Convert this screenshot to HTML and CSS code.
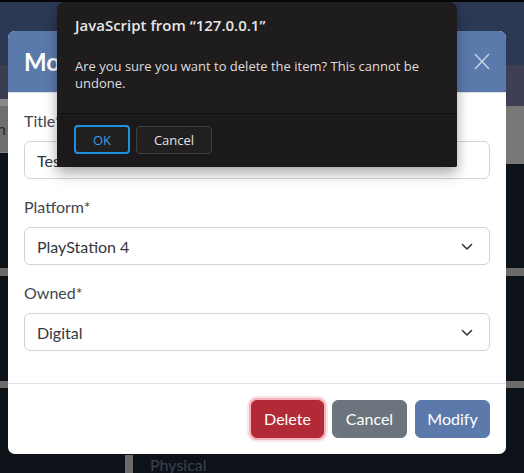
FILE: index.html
```html
<!DOCTYPE html>
<html lang="en">
<head>
<meta charset="utf-8">
<title>Modify</title>
<link rel="stylesheet" href="styles.css">
</head>
<body>
<div class="page">
  <div class="topline"></div>
  <div class="navbar"></div>
  <div class="content">
    <div class="side side-left">
      <div class="b l-a"></div>
      <div class="b l-b"></div>
      <div class="b l-c"><span class="edge-text">n</span></div>
      <div class="b l-line"></div>
      <div class="b l-dark1"></div>
      <div class="b rule"></div>
      <div class="b l-dark2"></div>
      <div class="b rule rule-2"></div>
    </div>
    <div class="center">
      <div class="cell-row"><span class="vbar"></span><span class="physical">Physical</span></div>
    </div>
    <div class="side side-right">
      <div class="b r-a"></div>
      <div class="b r-c"></div>
      <div class="b r-dark1"></div>
      <div class="b rule"></div>
      <div class="b l-dark2"></div>
      <div class="b rule rule-2"></div>
    </div>
  </div>
</div>

<div class="modal">
  <div class="modal-header">
    <h4 class="modal-title">Modify Game</h4>
    <span class="btn-close">
      <svg width="16" height="17" viewBox="0 0 16 17"><path d="M1 1 L15 16 M15 1 L1 16" stroke="currentColor" stroke-width="1.5" fill="none"/></svg>
    </span>
  </div>
  <div class="modal-body">
    <div class="group">
      <div class="label">Title*</div>
      <div class="control">Test Game</div>
    </div>
    <div class="group">
      <div class="label">Platform*</div>
      <div class="control select"><span>PlayStation 4</span>
        <svg class="chev" width="12" height="8" viewBox="0 0 12 8"><path d="M1.5 1.5 6 6 10.5 1.5" fill="none" stroke="#343a40" stroke-width="1.6" stroke-linecap="round" stroke-linejoin="round"/></svg>
      </div>
    </div>
    <div class="group">
      <div class="label">Owned*</div>
      <div class="control select"><span>Digital</span>
        <svg class="chev" width="12" height="8" viewBox="0 0 12 8"><path d="M1.5 1.5 6 6 10.5 1.5" fill="none" stroke="#343a40" stroke-width="1.6" stroke-linecap="round" stroke-linejoin="round"/></svg>
      </div>
    </div>
  </div>
  <div class="modal-footer">
    <button class="btn btn-danger">Delete</button>
    <button class="btn btn-secondary">Cancel</button>
    <button class="btn btn-primary">Modify</button>
  </div>
</div>

<div class="jsdialog">
  <div class="jd-main">
    <div class="jd-title">JavaScript from “127.0.0.1”</div>
    <div class="jd-msg">Are you sure you want to delete the item? This cannot be undone.</div>
  </div>
  <div class="jd-foot">
    <button class="jd-btn jd-ok">OK</button>
    <button class="jd-btn jd-cancel">Cancel</button>
  </div>
</div>
</body>
</html>
```
FILE: styles.css
```css
* { box-sizing: border-box; }
html, body { margin: 0; padding: 0; }
body {
  width: 524px;
  height: 473px;
  overflow: hidden;
  position: relative;
  background: #0d1219;
  font-family: Lato, "Noto Sans", sans-serif;
}
.page { display: flex; flex-direction: column; height: 473px; }
.topline { height: 2px; background: #060606; }
.navbar { height: 63px; background: #2c3954; }
.content { flex: 1; display: flex; }
.side { display: flex; flex-direction: column; }
.side-left { width: 8px; }
.side-right { width: 18px; }
.b { flex: none; }
.l-a { height: 34px; background: #3b3d50; }
.l-b { height: 7px; background: #8a8a8a; }
.l-c { height: 46px; background: #6e6e6e; overflow: hidden; color: #2a2a2a; font-size: 16px; line-height: 46px; }
.edge-text { display: block; margin-left: -3px; }
.l-line { height: 1px; background: #858585; }
.l-dark1 { height: 115px; }
.rule { height: 8px; background: #6b6b6b; }
.rule-2 { height: 7px; }
.l-dark2 { height: 105px; }
.r-a { height: 41px; background: #3e3f54; }
.r-c { height: 58px; background: #787878; }
.r-dark1 { height: 104px; }
.center { flex: 1; display: flex; flex-direction: column; justify-content: flex-end; }
.cell-row { display: flex; align-items: stretch; height: 18px; padding-left: 117px; }
.vbar { width: 8px; background: #6b6b6b; }
.physical { margin-left: 17px; color: #3a424d; font-size: 16px; line-height: 16px; margin-top: 2px; }

/* modal */
.modal {
  position: absolute;
  left: 8px;
  top: 31px;
  width: 498px;
  background: #fff;
  border-radius: 7px;
  overflow: hidden;
}
.modal-header {
  height: 62px;
  background: #5b7aac;
  border-bottom: 1px solid #dee2e6;
  display: flex;
  align-items: center;
  justify-content: space-between;
  padding: 0 16px;
}
.modal-title {
  margin: 0;
  color: #fff;
  font-size: 24px;
  font-weight: 700;
  line-height: 29px;
}
.btn-close { color: rgba(255,255,255,0.65); display: flex; }
.modal-body { padding: 16px 16px 16px; }
.group { margin-bottom: 16px; }
.label { font-size: 16px; line-height: 24px; color: #41464b; margin-bottom: 8px; }
.control {
  height: 38px;
  border: 1px solid #ced4da;
  border-radius: 6px;
  padding: 0 16px 0 12px;
  display: flex;
  align-items: center;
  justify-content: space-between;
  font-size: 16px;
  color: #33383d;
}
.chev { margin-top: 1px; }
.modal-footer {
  border-top: 1px solid #dee2e6;
  padding: 12px;
  height: 71px;
  display: flex;
  justify-content: flex-end;
  align-items: center;
}
.btn {
  font-family: inherit;
  font-size: 16px;
  line-height: 24px;
  height: 38px;
  border: 1px solid transparent;
  border-radius: 6px;
  color: #fff;
  margin: 4px;
  padding: 0;
}
.btn-danger { background: #b22a38; border-color: #b22a38; width: 73px; box-shadow: 0 0 0 2px #f4b3b9, 0 0 0 4px rgba(244,179,185,0.35); }
.btn-secondary { background: #6c757d; border-color: #6c757d; width: 75px; }
.btn-primary { background: #5b7aab; border-color: #5b7aab; width: 75px; }

/* javascript dialog */
.jsdialog {
  position: absolute;
  left: 57px;
  top: 2px;
  width: 400px;
  height: 165px;
  background: #1e1c1c;
  border-radius: 8px 8px 2px 2px;
  box-shadow: 0 6px 14px rgba(0,0,0,0.35);
  font-family: "Open Sans", "Noto Sans", sans-serif;
  color: #e2e2e2;
  display: flex;
  flex-direction: column;
}
.jd-main {
  height: 112px;
  padding: 12px 18px 0;
  border-bottom: 1px solid #121010;
}
.jd-title { font-size: 15px; font-weight: 600; line-height: 22px; color: #e6e6e6; }
.jd-msg { margin-top: 22px; font-size: 13px; line-height: 17px; color: #dedede; }
.jd-foot {
  flex: 1;
  background: #1b1919;
  display: flex;
  align-items: flex-start;
  padding: 11px 17px 0;
  border-radius: 0 0 2px 2px;
}
.jd-btn {
  font-family: inherit;
  font-size: 13px;
  height: 28px;
  border-radius: 4px;
  background: #211f1f;
  color: #e2e2e2;
  padding: 0;
}
.jd-ok { width: 56px; height: 29px; border: 2px solid #1f8fdf; color: #3b9de6; }
.jd-cancel { width: 76px; border: 1px solid #403d3d; margin-left: 6px; margin-top: 1px; }
```
